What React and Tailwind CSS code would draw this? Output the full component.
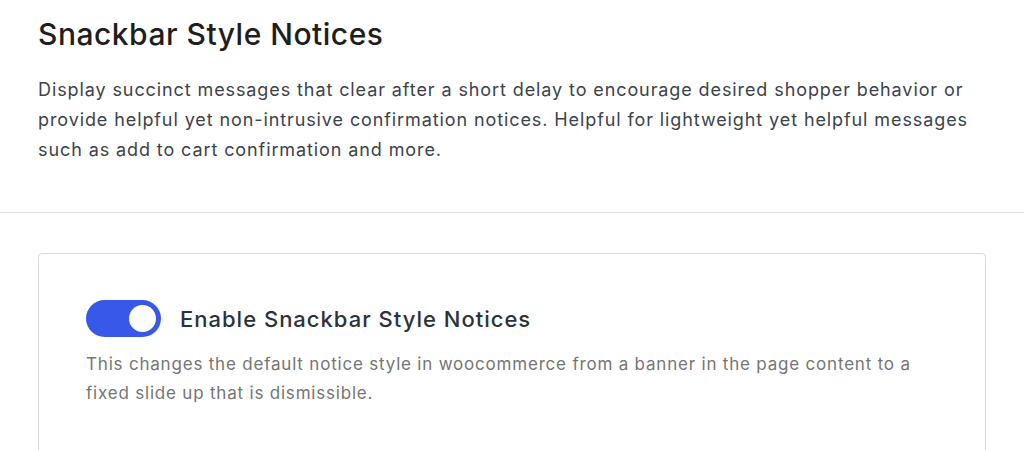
import React, { useState } from "react";

const Toggle = ({ checked, onChange }) => (
  <button
    type="button"
    onClick={() => onChange(!checked)}
    className={`flex h-[37px] w-[75px] shrink-0 items-center rounded-full px-[5px] ${
      checked ? "justify-end bg-[#3858e9]" : "justify-start bg-[#949494]"
    }`}
  >
    <span className="block h-[27px] w-[27px] rounded-full bg-white" />
  </button>
);

const App = () => {
  const [enabled, setEnabled] = useState(true);

  return (
    <div
      className="min-h-[450px] bg-white"
      style={{ fontFamily: "Inter, 'Noto Sans', sans-serif" }}
    >
      {/* Section header */}
      <div className="px-[38px] pt-[16px] pb-[47px]">
        <h1 className="text-[30px] font-medium leading-[36px] tracking-[0.5px] text-[#1e1e1e]">
          Snackbar Style Notices
        </h1>
        <p className="mt-[23px] max-w-[950px] text-[18px] leading-[30px] tracking-[0.9px] text-[#3c434a]">
          Display succinct messages that clear after a short delay to encourage desired shopper
          behavior or provide helpful yet non-intrusive confirmation notices. Helpful for
          lightweight yet helpful messages such as add to cart confirmation and more.
        </p>
      </div>

      <div className="border-t border-[#e0e0e0]" />

      {/* Setting card */}
      <div className="px-[38px] pt-[40px]">
        <div className="rounded-[4px] border border-[#dcdcde] px-[47px] pt-[46px] pb-[64px]">
          <div className="flex items-center gap-[19px]">
            <Toggle checked={enabled} onChange={setEnabled} />
            <span className="text-[22px] font-medium leading-[30px] tracking-[1px] text-[#2c3338]">
              Enable Snackbar Style Notices
            </span>
          </div>
          <p className="mt-[13px] max-w-[850px] text-[17px] leading-[29px] tracking-[0.8px] text-[#757575]">
            This changes the default notice style in woocommerce from a banner in the page
            content to a fixed slide up that is dismissible.
          </p>
        </div>
      </div>
    </div>
  );
};

export default App;
